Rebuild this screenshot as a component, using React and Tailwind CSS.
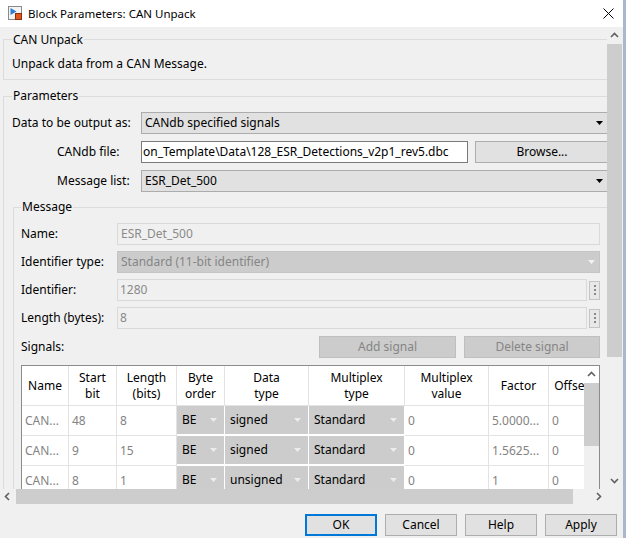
import React from "react";

const rows = [
  ["CAN...", "48", "8", "BE", "signed", "Standard", "0", "5.0000...", "0"],
  ["CAN...", "9", "15", "BE", "signed", "Standard", "0", "1.5625...", "0"],
  ["CAN...", "8", "1", "BE", "unsigned", "Standard", "0", "1", "0"],
];

// widths of the signal table columns, left to right
const cols = [
  { w: "w-[47px]", head: ["Name"] },
  { w: "w-[48px]", head: ["Start", "bit"] },
  { w: "w-[60px]", head: ["Length", "(bits)"] },
  { w: "w-[48px]", head: ["Byte", "order"], combo: true },
  { w: "w-[84px]", head: ["Data", "type"], combo: true },
  { w: "w-[96px]", head: ["Multiplex", "type"], combo: true },
  { w: "w-[84px]", head: ["Multiplex", "value"] },
  { w: "w-[60px]", head: ["Factor"] },
  { w: "w-[46px]", head: ["Offset"] },
];

function Caret({ className = "" }) {
  return (
    <svg width="7" height="4" viewBox="0 0 7 4" className={className}>
      <path d="M0 0h7L3.5 4z" fill="currentColor" />
    </svg>
  );
}

function Chevron({ dir = "up" }) {
  const d = {
    up: "M1 6L4.5 2.5L8 6",
    down: "M1 3L4.5 6.5L8 3",
    left: "M6 1L2.5 4.5L6 8",
    right: "M3 1L6.5 4.5L3 8",
  }[dir];
  return (
    <svg width="9" height="9" viewBox="0 0 9 9">
      <path d={d} fill="none" stroke="#606060" strokeWidth="1.6" />
    </svg>
  );
}

function Combo({ children, className = "" }) {
  return (
    <div
      className={`flex h-[22px] items-center justify-between border border-[#acacac] bg-[#e1e1e1] pl-[3px] pr-[5px] ${className}`}
    >
      <span className="whitespace-nowrap">{children}</span>
      <Caret className="text-black" />
    </div>
  );
}

function DotsButton() {
  return (
    <div className="ml-[2px] flex h-[19px] w-[11px] flex-col items-center justify-center gap-[2px] border border-[#c4c4c4] bg-[#e8e8e8]">
      <span className="h-[2px] w-[2px] bg-[#8a8a8a]" />
      <span className="h-[2px] w-[2px] bg-[#8a8a8a]" />
      <span className="h-[2px] w-[2px] bg-[#8a8a8a]" />
    </div>
  );
}

function SignalTable() {
  return (
    <div className="ml-[7px] mt-[7px] flex h-[140px] w-[579px] border border-[#8c8c8c] bg-white">
      <div className="w-[562px] overflow-hidden">
        <div className="flex w-[600px]">
          {cols.map((c, i) => (
            <div key={i} className={`${c.w} shrink-0`}>
              <div className="flex h-[40px] flex-col items-center justify-center border-b border-r border-[#e3e3e3] leading-[16px]">
                {c.head.map((h) => (
                  <div key={h} className="whitespace-nowrap">
                    {h}
                  </div>
                ))}
              </div>
              {rows.map((r, j) =>
                c.combo ? (
                  <div
                    key={j}
                    className="flex h-[30px] items-center justify-between border-b-2 border-r border-white bg-[#cccccc] pl-[5px] pr-[7px]"
                  >
                    <span className="whitespace-nowrap">{r[i]}</span>
                    <Caret className="text-[#ececec]" />
                  </div>
                ) : (
                  <div
                    key={j}
                    className="flex h-[30px] items-center overflow-hidden whitespace-nowrap border-b border-r border-[#e3e3e3] pl-[3px] text-[#838383]"
                  >
                    {r[i]}
                  </div>
                )
              )}
            </div>
          ))}
        </div>
      </div>
      <div className="flex w-[15px] flex-col bg-[#f0f0f0]">
        <div className="flex h-[17px] items-center justify-center bg-white">
          <Chevron dir="up" />
        </div>
        <div className="h-[63px] bg-[#cdcdcd]" />
      </div>
    </div>
  );
}

export default function App() {
  return (
    <div className="flex h-[538px] w-[626px] overflow-hidden bg-[#f0f0f0] font-['Noto_Sans',sans-serif] text-[12px] leading-[16px] text-black">
      <div className="flex w-[623px] flex-col">
        {/* Title bar */}
        <div className="flex h-[27px] items-center bg-white pl-[8px]">
          <svg width="15" height="15" viewBox="0 0 15 15">
            <rect x="0.5" y="0.5" width="13" height="13" fill="#f4f4f4" stroke="#8a8a8a" />
            <path d="M2.5 2L8.5 5.5L2.5 9z" fill="#2f7fd0" />
            <rect x="7.5" y="7.5" width="6" height="6" fill="#e0561c" stroke="#8c2c08" />
          </svg>
          <span className="ml-[5px] text-[11.5px]">Block Parameters: CAN Unpack</span>
          <svg className="ml-auto mr-[9px]" width="11" height="11" viewBox="0 0 11 11">
            <path d="M0.5 0.5L10.5 10.5M10.5 0.5L0.5 10.5" stroke="#000" strokeWidth="1" />
          </svg>
        </div>

        <div className="flex h-[462px]">
          {/* Dialog content */}
          <div className="w-[607px] overflow-hidden">
            <div className="w-[640px]">
              <div className="ml-[3px] mt-[12px] w-[630px] border-y border-l border-[#dcdcdc]">
                <div className="-mt-[8px] ml-[8px] w-fit bg-[#f0f0f0] px-[1px]">CAN Unpack</div>
                <div className="mt-[8px] pb-[7px] pl-[8px]">Unpack data from a CAN Message.</div>
              </div>

              <div className="ml-[3px] mt-[16px] w-[630px] border-l border-t border-[#dcdcdc]">
                <div className="-mt-[9px] ml-[8px] w-fit bg-[#f0f0f0] px-[1px]">Parameters</div>

                <div className="mt-[8px] flex h-[22px] items-center">
                  <div className="w-[137px] pl-[8px]">Data to be output as:</div>
                  <Combo className="w-[468px]">CANdb specified signals</Combo>
                </div>
                <div className="mt-[7px] flex h-[22px] items-center">
                  <div className="w-[137px] pl-[53px]">CANdb file:</div>
                  <div className="flex h-[22px] w-[327px] items-center overflow-hidden whitespace-nowrap border border-[#7a7a7a] bg-white pl-[1px]">
                    {"on_Template\\Data\\128_ESR_Detections_v2p1_rev5.dbc"}
                  </div>
                  <div className="ml-[7px] flex h-[22px] w-[134px] items-center justify-center border border-[#adadad] bg-[#e1e1e1]">
                    Browse...
                  </div>
                </div>
                <div className="mt-[7px] flex h-[22px] items-center">
                  <div className="w-[137px] pl-[53px]">Message list:</div>
                  <Combo className="w-[468px]">ESR_Det_500</Combo>
                </div>

                <div className="ml-[9px] mt-[15px] w-[610px] border-l border-t border-[#dcdcdc]">
                  <div className="-mt-[9px] ml-[7px] w-fit bg-[#f0f0f0] px-[1px]">Message</div>

                  <div className="mt-[8px] flex h-[22px] items-center">
                    <div className="w-[103px] pl-[7px]">Name:</div>
                    <div className="flex h-[22px] w-[483px] items-center border border-[#d9d9d9] pl-[3px] text-[#8a8a8a]">
                      ESR_Det_500
                    </div>
                  </div>
                  <div className="mt-[6px] flex h-[22px] items-center">
                    <div className="w-[103px] pl-[7px]">Identifier type:</div>
                    <div className="flex h-[22px] w-[483px] items-center justify-between border border-[#c4c4c4] bg-[#cccccc] pl-[3px] pr-[4px] text-[#858585]">
                      <span>Standard (11-bit identifier)</span>
                      <Caret className="text-[#f2f2f2]" />
                    </div>
                  </div>
                  <div className="mt-[6px] flex h-[22px] items-center">
                    <div className="w-[103px] pl-[7px]">Identifier:</div>
                    <div className="flex h-[22px] w-[470px] items-center border border-[#d9d9d9] pl-[2px] text-[#8a8a8a]">
                      1280
                    </div>
                    <DotsButton />
                  </div>
                  <div className="mt-[6px] flex h-[22px] items-center">
                    <div className="w-[103px] pl-[7px]">Length (bytes):</div>
                    <div className="flex h-[22px] w-[470px] items-center border border-[#d9d9d9] pl-[2px] text-[#8a8a8a]">
                      8
                    </div>
                    <DotsButton />
                  </div>
                  <div className="mt-[7px] flex h-[22px] w-[586px] items-center justify-between">
                    <div className="pl-[7px]">Signals:</div>
                    <div className="flex gap-[8px] text-[#858585]">
                      <div className="flex h-[22px] w-[137px] items-center justify-center border border-[#bfbfbf] bg-[#cccccc]">
                        Add signal
                      </div>
                      <div className="flex h-[22px] w-[136px] items-center justify-center border border-[#bfbfbf] bg-[#cccccc]">
                        Delete signal
                      </div>
                    </div>
                  </div>

                  <SignalTable />
                </div>
              </div>
            </div>
          </div>

          {/* Window vertical scrollbar */}
          <div className="flex w-[15px] flex-col">
            <div className="flex h-[17px] items-center justify-center">
              <Chevron dir="up" />
            </div>
            <div className="h-[313px] bg-[#cdcdcd]" />
            <div className="flex-1" />
            <div className="flex h-[17px] items-center justify-center">
              <Chevron dir="down" />
            </div>
          </div>
        </div>

        {/* Window horizontal scrollbar */}
        <div className="flex h-[15px] items-center">
          <div className="flex w-[15px] justify-center">
            <Chevron dir="left" />
          </div>
          <div className="ml-[1px] h-[15px] w-[557px] bg-[#cdcdcd]" />
          <div className="flex-1" />
          <div className="flex w-[17px] justify-center">
            <Chevron dir="right" />
          </div>
          <div className="w-[16px]" />
        </div>

        {/* Dialog buttons */}
        <div className="flex h-[34px] items-start justify-end gap-[8px] pr-[6px] pt-[10px]">
          <div className="flex h-[22px] w-[72px] items-center justify-center border-2 border-[#0078d7] bg-[#e1e1e1]">OK</div>
          <div className="flex h-[22px] w-[72px] items-center justify-center border border-[#adadad] bg-[#e1e1e1]">Cancel</div>
          <div className="flex h-[22px] w-[72px] items-center justify-center border border-[#adadad] bg-[#e1e1e1]">Help</div>
          <div className="flex h-[22px] w-[72px] items-center justify-center border border-[#adadad] bg-[#e1e1e1]">Apply</div>
        </div>
      </div>
      <div className="w-[3px] bg-[#a9b6cc]" />
    </div>
  );
}
